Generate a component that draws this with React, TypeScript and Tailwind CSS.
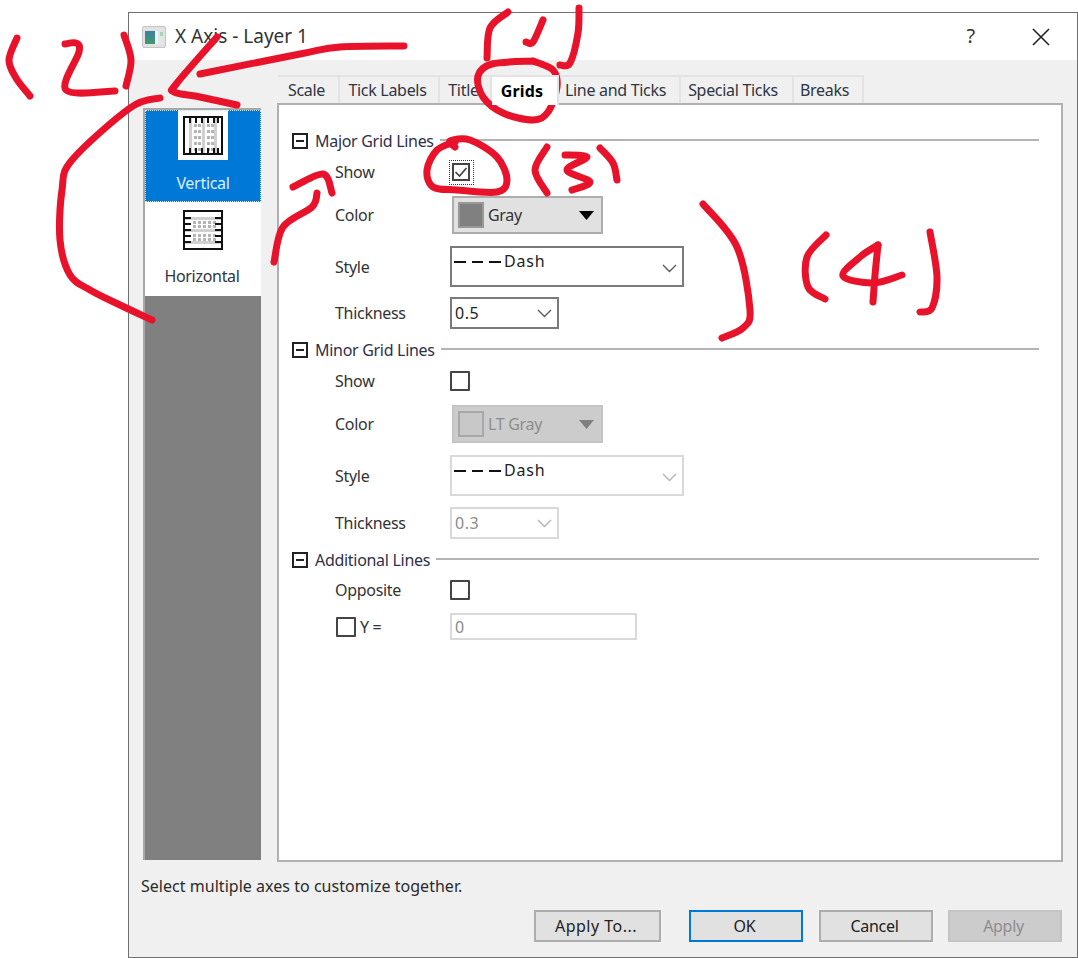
import React from "react";

const fontCls = "font-['Noto_Sans','Open_Sans',sans-serif]";

function smooth(pts: number[][]) {
  let d = `M${pts[0][0]} ${pts[0][1]}`;
  for (let i = 0; i < pts.length - 1; i++) {
    const p0 = pts[Math.max(i - 1, 0)];
    const p1 = pts[i];
    const p2 = pts[i + 1];
    const p3 = pts[Math.min(i + 2, pts.length - 1)];
    const c1x = p1[0] + (p2[0] - p0[0]) / 6;
    const c1y = p1[1] + (p2[1] - p0[1]) / 6;
    const c2x = p2[0] - (p3[0] - p1[0]) / 6;
    const c2y = p2[1] - (p3[1] - p1[1]) / 6;
    d += ` C${c1x} ${c1y} ${c2x} ${c2y} ${p2[0]} ${p2[1]}`;
  }
  return d;
}

const strokes: number[][][] = [
  [[17, 38], [9, 60], [16, 78], [30, 96]],
  [[65, 44], [76, 43], [79, 52], [66, 90], [115, 91]],
  [[124, 35], [131, 60], [126, 86]],
  [[404, 46], [340, 47], [300, 54], [200, 74]],
  [[217, 37], [177, 83], [174, 92], [200, 97], [237, 105]],
  [[160, 98], [130, 108], [72, 160], [62, 190], [60, 240], [70, 275], [90, 290], [120, 305], [152, 320]],
  [[508, 12], [490, 28], [487, 58]],
  [[543, 20], [533, 42], [526, 42]],
  [[579, 8], [578, 33], [570, 63], [560, 65]],
  [[533, 61], [492, 64], [478, 76], [483, 97], [503, 113], [533, 120], [548, 112], [557, 87], [553, 70], [533, 61]],
  [[455, 147], [450, 141], [470, 140], [497, 157], [507, 180], [497, 192], [457, 190], [433, 187], [427, 170], [437, 150], [455, 142]],
  [[547, 147], [535, 170], [547, 193]],
  [[565, 155], [587, 157], [567, 170], [590, 182], [572, 190]],
  [[600, 148], [613, 163], [617, 180]],
  [[293, 187], [323, 174], [332, 193]],
  [[317, 193], [312, 207], [283, 227], [274, 262]],
  [[703, 204], [737, 247], [750, 310], [743, 328], [722, 338]],
  [[826, 235], [807, 257], [808, 287], [825, 299]],
  [[878, 245], [860, 257], [843, 276], [873, 283], [902, 275]],
  [[878, 245], [875, 275], [873, 302]],
  [[930, 232], [937, 277], [932, 308], [920, 312]],
];

function Chevron({ muted }: { muted?: boolean }) {
  return (
    <svg width="15" height="9" viewBox="0 0 15 9" className="shrink-0">
      <path d="M1 1 L7.5 7.5 L14 1" fill="none" stroke={muted ? "#b4b4b4" : "#5a5a5a"} strokeWidth="1.4" />
    </svg>
  );
}

function Minus() {
  return (
    <svg width="16" height="16" viewBox="0 0 16 16" className="shrink-0">
      <rect x="1" y="1" width="14" height="14" fill="#fff" stroke="#222" strokeWidth="2" />
      <path d="M4 8 H12" stroke="#222" strokeWidth="2" />
    </svg>
  );
}

function Header({ label, cls }: { label: string; cls: string }) {
  return (
    <div className={`flex items-center h-5 pl-[13px] pr-[22px] ${cls}`}>
      <Minus />
      <span className="ml-[7px] text-[#30304a] whitespace-nowrap">{label}</span>
      <div className="ml-[6px] flex-1 h-[2px] bg-[#b4b4b4] -translate-y-[1px]" />
    </div>
  );
}

function Row({ label, cls, h, children }: { label: string; cls: string; h: string; children: React.ReactNode }) {
  return (
    <div className={`flex items-center pl-[56px] ${h} ${cls}`}>
      <span className="w-[115px] shrink-0 text-[#333]">{label}</span>
      {children}
    </div>
  );
}

function Box() {
  return <div className="w-5 h-5 bg-white border-2 border-[#444] rounded-[1px]" />;
}

function ColorBtn({ label, disabled }: { label: string; disabled?: boolean }) {
  return (
    <div className={`ml-[2px] w-[151px] h-[38px] flex items-center pl-[4px] pr-[7px] border-2 ${disabled ? "bg-[#cccccc] border-[#c4c4c4]" : "bg-[#e1e1e1] border-[#adadad]"}`}>
      <div className={`w-[26px] h-[26px] border-2 ${disabled ? "bg-[#c8c8c8] border-[#a8a8a8]" : "bg-[#808080] border-[#989898]"}`} />
      <span className={`ml-[4px] flex-1 ${disabled ? "text-[#8c8c8c]" : "text-[#333]"}`}>{label}</span>
      <svg width="15" height="9" viewBox="0 0 15 9">
        <path d="M0 0 H15 L7.5 9 Z" fill={disabled ? "#808080" : "#000"} />
      </svg>
    </div>
  );
}

function StyleSelect({ disabled }: { disabled?: boolean }) {
  return (
    <div className={`w-[234px] h-[41px] flex bg-white border-2 pl-[2px] pr-[5px] ${disabled ? "border-[#d9d9d9]" : "border-[#7a7a7a]"}`}>
      <div className="flex items-center h-[26px]">
        <svg width="49" height="4" viewBox="0 0 49 4" className="mr-[1px] translate-y-[1px]">
          <path d="M0 2 H12 M18 2 H29 M35 2 H47" stroke="#111" strokeWidth="2" />
        </svg>
        <span className="text-[#222] tracking-[0.8px]">Dash</span>
      </div>
      <div className="ml-auto flex items-center mt-[3px]">
        <Chevron muted={disabled} />
      </div>
    </div>
  );
}

function ThicknessSelect({ value, disabled }: { value: string; disabled?: boolean }) {
  return (
    <div className={`w-[109px] h-[32px] flex items-center justify-between bg-white border-2 pl-[3px] pr-[5px] ${disabled ? "border-[#d9d9d9] text-[#8c8c8c]" : "border-[#7a7a7a] text-[#222]"}`}>
      <span className="tracking-[0.5px]">{value}</span>
      <Chevron muted={disabled} />
    </div>
  );
}

function Tab({ label, w, active }: { label: string; w: string; active?: boolean }) {
  return (
    <div
      className={`${w} h-[28px] shrink-0 flex items-center justify-center border-t-2 border-r-2 border-[#e3e3e3] text-[#2f3542] ${active ? "font-bold bg-white text-black relative z-10 h-[30px] tracking-[0.2px]" : ""}`}
    >
      {label}
    </div>
  );
}

function Btn({ label, w, cls }: { label: string; w: string; cls: string }) {
  return (
    <div className={`${w} h-[32px] flex items-center justify-center border-2 pr-[3px] ${cls}`}>{label}</div>
  );
}

function VerticalIcon() {
  const ticks = [6, 12, 18, 24, 30, 34];
  return (
    <svg width="40" height="39" viewBox="0 0 40 39">
      <rect width="40" height="39" fill="#fff" />
      {[6, 19, 31].map((x) => (
        <rect key={x} x={x} y="2" width="3" height="35" fill="#d0d0d0" />
      ))}
      {[8, 14, 20, 26, 32].map((y) =>
        [11, 15, 24, 28].map((x) => (
          <rect key={`${x}-${y}`} x={x} y={y} width="3" height="3" fill="#b4b4b4" />
        ))
      )}
      {ticks.map((x) => (
        <g key={x}>
          <rect x={x} y="1" width="2" height="6" fill="#111" />
          <rect x={x} y="32" width="2" height="6" fill="#111" />
        </g>
      ))}
      <rect x="1" y="1" width="38" height="37" fill="none" stroke="#111" strokeWidth="2" />
    </svg>
  );
}

function HorizontalIcon() {
  return (
    <svg width="40" height="40" viewBox="0 0 40 40">
      <rect width="40" height="40" fill="#fff" />
      {[7, 19, 31].map((y) => (
        <rect key={y} x="2" y={y} width="36" height="3" fill="#d0d0d0" />
      ))}
      {[11, 15, 24, 28].map((y) =>
        [10, 15, 20, 25, 30].map((x) => (
          <rect key={`${x}-${y}`} x={x} y={y} width="3" height="3" fill="#b4b4b4" />
        ))
      )}
      {[7, 13, 19, 25, 31].map((y) => (
        <g key={y}>
          <rect x="1" y={y} width="7" height="2" fill="#111" />
          <rect x="32" y={y} width="7" height="2" fill="#111" />
        </g>
      ))}
      <rect x="1" y="1" width="38" height="38" fill="none" stroke="#111" strokeWidth="2" />
    </svg>
  );
}

export default function App() {
  return (
    <div className={`relative w-[1078px] h-[958px] bg-white pt-3 pl-[128px] overflow-hidden text-[16px] leading-5 tracking-[-0.3px] ${fontCls}`}>
      <div className="w-[950px] h-[946px] flex flex-col border border-[#707070] bg-[#f0f0f0]">
        <div className="h-[47px] bg-white flex items-center pl-[13px] pr-[27px] shrink-0">
          <svg width="24" height="22" viewBox="0 0 24 22" className="shrink-0">
            <defs>
              <linearGradient id="tg" x1="0" y1="0" x2="0" y2="1">
                <stop offset="0" stopColor="#3f7fa8" />
                <stop offset="1" stopColor="#3f9a6a" />
              </linearGradient>
            </defs>
            <rect x="0.5" y="0.5" width="23" height="21" rx="1.5" fill="#e2e2e2" stroke="#c4c4c4" />
            <rect x="3" y="5" width="10" height="13" fill="url(#tg)" />
            <rect x="13" y="5" width="3" height="13" fill="#f4f4f4" />
            <rect x="16" y="5" width="5" height="13" fill="#dfe8e4" />
            <rect x="18" y="6" width="3" height="4" fill="#a9d3b9" />
          </svg>
          <span className="ml-[9px] text-[19px] tracking-[0px] -translate-y-[1px] text-[#333]">X Axis - Layer 1</span>
          <span className="ml-auto text-[20px] -translate-y-[1px] text-[#333]">?</span>
          <svg width="18" height="18" viewBox="0 0 18 18" className="ml-[57px]">
            <path d="M1 1 L17 17 M17 1 L1 17" stroke="#222" strokeWidth="1.6" />
          </svg>
        </div>

        <div className="flex-1 flex flex-col pl-[14px] pr-[13px]">
          <div className="flex gap-[16px] h-[802px] pt-[15px] shrink-0">
            <div className="w-[118px] mt-[33px] h-[752px] flex flex-col bg-[#808080] border-t-2 border-l-2 border-[#a8a8a8]">
              <div className="h-[92px] bg-[#0078d7] flex flex-col items-center text-[#dceeff] outline-1 -outline-offset-1 outline-dotted outline-[#cfe6fa]">
                <div className="bg-white w-[50px] h-[50px] flex items-center justify-center">
                  <VerticalIcon />
                </div>
                <span className="mt-[13px]">Vertical</span>
              </div>
              <div className="h-[94px] bg-white flex flex-col items-center pt-[8px] text-[#2f3542]">
                <HorizontalIcon />
                <span className="mt-[16px] -ml-[2px]">Horizontal</span>
              </div>
            </div>

            <div className="w-[786px] flex flex-col">
              <div className="flex pl-px h-[28px] shrink-0 items-start">
                <Tab label="Scale" w="w-[62px] pr-[3px]" />
                <Tab label="Tick Labels" w="w-[100px] pr-[3px]" />
                <Tab label="Title" w="w-[52px] pr-[3px]" />
                <Tab label="Grids" w="w-[67px] pr-[5px]" active />
                <Tab label="Line and Ticks" w="w-[122px] pr-[7px]" />
                <Tab label="Special Ticks" w="w-[113px] pr-[7px]" />
                <Tab label="Breaks" w="w-[70px] pr-[7px]" />
              </div>
              <div className="h-[759px] bg-white border-2 border-[#b0b0b0] pt-[26px]">
                <Header label="Major Grid Lines" cls="" />
                <Row label="Show" h="h-[22px]" cls="mt-[10px]">
                  <div className="w-[25px] h-[25px] -ml-px border border-dotted border-[#333] flex items-center pl-[2px] bg-white">
                    <svg width="18" height="18" viewBox="0 0 18 18">
                      <rect x="1" y="1" width="16" height="16" fill="none" stroke="#444" strokeWidth="2" />
                      <path d="M3.5 9 L7.5 13 L14.5 5" fill="none" stroke="#444" strokeWidth="1.7" />
                    </svg>
                  </div>
                </Row>
                <Row label="Color" h="h-[38px]" cls="mt-[13px]">
                  <ColorBtn label="Gray" />
                </Row>
                <Row label="Style" h="h-[41px]" cls="mt-[12px]">
                  <StyleSelect />
                </Row>
                <Row label="Thickness" h="h-[32px]" cls="mt-[10px]">
                  <ThicknessSelect value="0.5" />
                </Row>
                <Header label="Minor Grid Lines" cls="mt-[11px]" />
                <Row label="Show" h="h-5" cls="mt-[11px]">
                  <Box />
                </Row>
                <Row label="Color" h="h-[38px]" cls="mt-[14px]">
                  <ColorBtn label="LT Gray" disabled />
                </Row>
                <Row label="Style" h="h-[41px]" cls="mt-[12px]">
                  <StyleSelect disabled />
                </Row>
                <Row label="Thickness" h="h-[32px]" cls="mt-[11px]">
                  <ThicknessSelect value="0.3" disabled />
                </Row>
                <Header label="Additional Lines" cls="mt-[11px]" />
                <Row label="Opposite" h="h-5" cls="mt-[10px]">
                  <Box />
                </Row>
                <div className="flex items-center h-[27px] mt-[13px] pl-[57px]">
                  <Box />
                  <span className="w-[90px] ml-[4px] text-[#333]">Y =</span>
                  <div className="w-[187px] h-[27px] border-2 border-[#d9d9d9] bg-white pl-[3px] flex items-center text-[#8c8c8c]">0</div>
                </div>
              </div>
            </div>
          </div>

          <div className="mt-[14px] -ml-[2px] text-[#2b2b2b] h-5 leading-5 tracking-[0.03px]">Select multiple axes to customize together.</div>
          <div className="mt-[14px] flex justify-end pr-[2px]">
            <Btn label="Apply To..." w="w-[127px] tracking-[0.5px]" cls="bg-[#e1e1e1] border-[#adadad] text-[#222]" />
            <Btn label="OK" w="w-[114px] ml-[28px]" cls="bg-[#e1e1e1] border-[#0078d7] text-[#222]" />
            <Btn label="Cancel" w="w-[114px] ml-[16px]" cls="bg-[#e1e1e1] border-[#adadad] text-[#222]" />
            <Btn label="Apply" w="w-[114px] ml-[15px]" cls="bg-[#cccccc] border-[#c4c4c4] text-[#8c8c8c]" />
          </div>
        </div>
      </div>

      <svg width="1078" height="958" viewBox="0 0 1078 958" className="absolute left-0 top-0 pointer-events-none">
        {strokes.map((p, i) => (
          <path key={i} d={smooth(p)} fill="none" stroke="#e8132a" strokeWidth="7" strokeLinecap="round" strokeLinejoin="round" />
        ))}
      </svg>
    </div>
  );
}
